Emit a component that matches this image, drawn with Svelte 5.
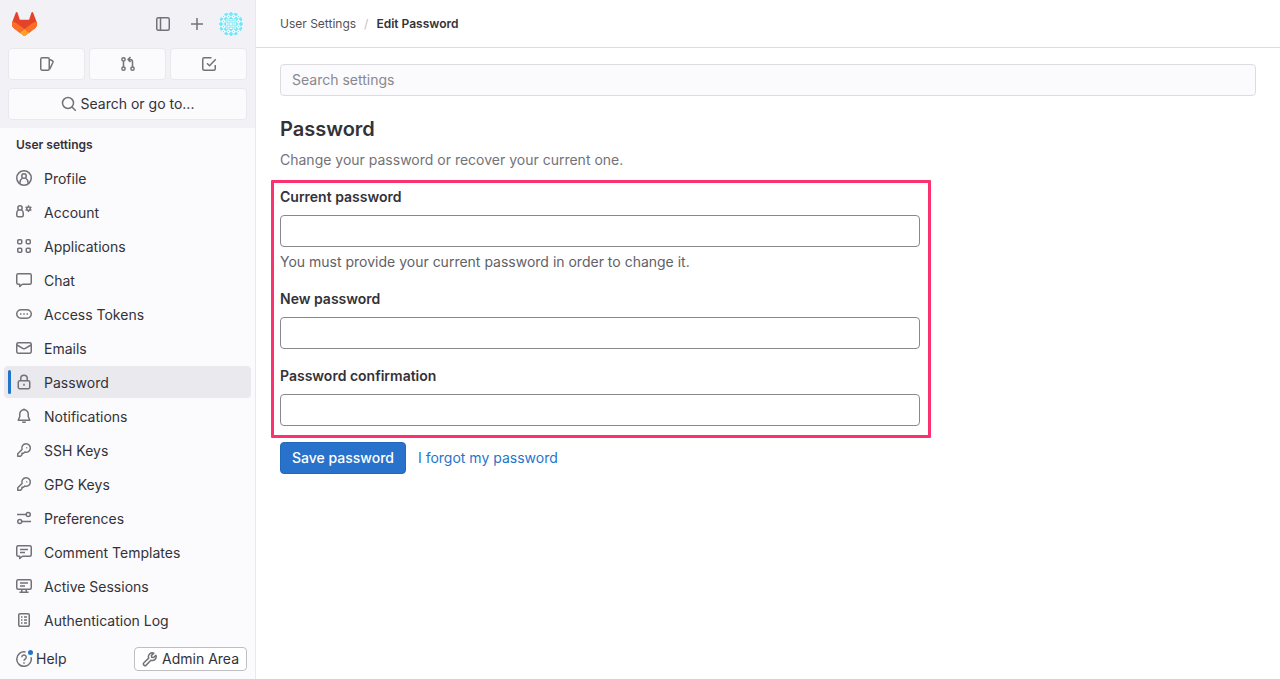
<script lang="ts">
  type NavItem = {
    title: string;
    icon: string;
  };

  const navItems: NavItem[] = [
    { title: "Profile", icon: "profile" },
    { title: "Account", icon: "account" },
    { title: "Applications", icon: "applications" },
    { title: "Chat", icon: "comment" },
    { title: "Access Tokens", icon: "token" },
    { title: "Emails", icon: "mail" },
    { title: "Password", icon: "lock" },
    { title: "Notifications", icon: "bell" },
    { title: "SSH Keys", icon: "key" },
    { title: "GPG Keys", icon: "key" },
    { title: "Preferences", icon: "preferences" },
    { title: "Comment Templates", icon: "comment-lines" },
    { title: "Active Sessions", icon: "monitor-lines" },
    { title: "Authentication Log", icon: "log" },
  ];

  const shortcuts = [
    { title: "Issues", icon: "issues" },
    { title: "Merge requests", icon: "merge-request" },
    { title: "To-Do List", icon: "todo-done" },
  ];

  // 16x16 outlines, drawn with a 1.5 stroke
  const icons: Record<string, string[]> = {
    sidebar: [
      "M3.25 1.75h9.5a1.5 1.5 0 0 1 1.5 1.5v9.5a1.5 1.5 0 0 1-1.5 1.5h-9.5a1.5 1.5 0 0 1-1.5-1.5v-9.5a1.5 1.5 0 0 1 1.5-1.5z",
      "M5.5 2v12",
    ],
    plus: ["M8 2v12M2 8h12"],
    issues: [
      "M3.25 1.75h5.5a1.5 1.5 0 0 1 1.5 1.5v9.5a1.5 1.5 0 0 1-1.5 1.5h-5.5a1.5 1.5 0 0 1-1.5-1.5v-9.5a1.5 1.5 0 0 1 1.5-1.5z",
      "M10.5 3.4l2.9 1.4a1.2 1.2 0 0 1 .6 1.5l-3.3 6.9",
    ],
    "merge-request": [
      "M3.5 5v6M3.5 1.75a1.6 1.6 0 1 1 0 3.25 1.6 1.6 0 0 1 0-3.25zM3.5 11a1.6 1.6 0 1 1 0 3.25 1.6 1.6 0 0 1 0-3.25zM12.5 11a1.6 1.6 0 1 1 0 3.25 1.6 1.6 0 0 1 0-3.25z",
      "M12.5 11V6a2.5 2.5 0 0 0-2.5-2.5H8.5M10.5 1L8 3.5 10.5 6",
    ],
    "todo-done": [
      "M10.5 1.75H3.25a1.5 1.5 0 0 0-1.5 1.5v9.5a1.5 1.5 0 0 0 1.5 1.5h9.5a1.5 1.5 0 0 0 1.5-1.5V9",
      "M6 7.25l2.5 2.5 6.25-6.5",
    ],
    search: [
      "M7 1.5a5.5 5.5 0 1 1 0 11 5.5 5.5 0 0 1 0-11z",
      "M11 11l3.75 3.75",
    ],
    profile: [
      "M8 .75a7.25 7.25 0 1 1 0 14.5 7.25 7.25 0 0 1 0-14.5z",
      "M8 3.75a2.25 2.25 0 1 1 0 4.5 2.25 2.25 0 0 1 0-4.5z",
      "M4 13.75v-1.5c0-2 1-3.25 2.5-4.25M12 13.75v-1.5c0-2-1-3.25-2.5-4.25",
    ],
    account: [
      "M4 1.75a2.1 2.1 0 1 1 0 4.25 2.1 2.1 0 0 1 0-4.25z",
      "M2.5 5.75C1.4 6.5.75 7.75.75 9.25v2a1.5 1.5 0 0 0 1.5 1.5h3.5a1.5 1.5 0 0 0 1.5-1.5v-2c0-1.5-.65-2.75-1.75-3.5",
      "M12.5 2.9a1.75 1.75 0 1 1 0 3.5 1.75 1.75 0 0 1 0-3.5z",
      "M12.5 1.25v1.5M12.5 6.5v1.5M9.6 3l1.2.7M14.2 5.6l1.2.7M9.6 6.3l1.2-.7M14.2 3.7l1.2-.7",
    ],
    applications: [
      "M2.75 1.75h2a1 1 0 0 1 1 1v2a1 1 0 0 1-1 1h-2a1 1 0 0 1-1-1v-2a1 1 0 0 1 1-1z",
      "M11.25 1.75h2a1 1 0 0 1 1 1v2a1 1 0 0 1-1 1h-2a1 1 0 0 1-1-1v-2a1 1 0 0 1 1-1z",
      "M2.75 10.25h2a1 1 0 0 1 1 1v2a1 1 0 0 1-1 1h-2a1 1 0 0 1-1-1v-2a1 1 0 0 1 1-1z",
      "M11.25 10.25h2a1 1 0 0 1 1 1v2a1 1 0 0 1-1 1h-2a1 1 0 0 1-1-1v-2a1 1 0 0 1 1-1z",
    ],
    comment: [
      "M2.25 1.75h11.5a1.5 1.5 0 0 1 1.5 1.5v7.5a1.5 1.5 0 0 1-1.5 1.5H6.5L3.75 14.5v-2.25h-1.5a1.5 1.5 0 0 1-1.5-1.5v-7.5a1.5 1.5 0 0 1 1.5-1.5z",
    ],
    token: [
      "M5 3.75h6a4.25 4.25 0 0 1 0 8.5H5a4.25 4.25 0 0 1 0-8.5z",
      "M4 8h1.5M7.25 8h1.5M10.5 8H12",
    ],
    mail: [
      "M2.25 2.75h11.5a1.5 1.5 0 0 1 1.5 1.5v7.5a1.5 1.5 0 0 1-1.5 1.5H2.25a1.5 1.5 0 0 1-1.5-1.5v-7.5a1.5 1.5 0 0 1 1.5-1.5z",
      "M1 5l6.2 3.6a1.6 1.6 0 0 0 1.6 0L15 5",
    ],
    lock: [
      "M3.75 6.75h8.5a1.5 1.5 0 0 1 1.5 1.5v5a1.5 1.5 0 0 1-1.5 1.5h-8.5a1.5 1.5 0 0 1-1.5-1.5v-5a1.5 1.5 0 0 1 1.5-1.5z",
      "M4.75 6.5v-2a3.25 3.25 0 0 1 6.5 0v2",
      "M8 9.75v2",
    ],
    bell: [
      "M8 1.75a4.25 4.25 0 0 0-4.25 4.25v2.5L2.25 12.25h11.5l-1.5-3.75V6A4.25 4.25 0 0 0 8 1.75z",
      "M8 .5v1M6.25 14.25h3.5",
    ],
    key: [
      "M10 1.75a4.25 4.25 0 1 1-1.2 8.3L7.5 11.25H6v1.5L4.5 14.25H1.75v-2.5l4.3-4.3A4.25 4.25 0 0 1 10 1.75z",
      "M10.25 5.75h1",
    ],
    preferences: [
      "M1 4.5h9M12.25 2.5a2 2 0 1 1 0 4 2 2 0 0 1 0-4z",
      "M6 11.5h9M3.75 9.5a2 2 0 1 1 0 4 2 2 0 0 1 0-4z",
    ],
    "comment-lines": [
      "M2.25 1.75h11.5a1.5 1.5 0 0 1 1.5 1.5v7.5a1.5 1.5 0 0 1-1.5 1.5H6.5L3.75 14.5v-2.25h-1.5a1.5 1.5 0 0 1-1.5-1.5v-7.5a1.5 1.5 0 0 1 1.5-1.5z",
      "M4 5.5h8M4 8.5h5",
    ],
    "monitor-lines": [
      "M2.25 1.75h11.5a1.5 1.5 0 0 1 1.5 1.5v6.5a1.5 1.5 0 0 1-1.5 1.5H2.25a1.5 1.5 0 0 1-1.5-1.5v-6.5a1.5 1.5 0 0 1 1.5-1.5z",
      "M4 5h8M4 8h5M5.75 11.5v2.5M10.25 11.5v2.5M3.5 14.25h9",
    ],
    log: [
      "M4 1.75h8a1.25 1.25 0 0 1 1.25 1.25v10A1.25 1.25 0 0 1 12 14.25H4A1.25 1.25 0 0 1 2.75 13V3A1.25 1.25 0 0 1 4 1.75z",
      "M5 5h1.5M8 5h3M5 8h1.5M8 8h3M5 11h1.5M8 11h3",
    ],
    help: [
      "M9.5 1A7.25 7.25 0 1 0 15 6.2",
      "M5.75 6.25a2.25 2.25 0 1 1 3.3 2C8.4 8.6 8 9 8 9.75M8 11.25v1.5",
    ],
    wrench: [
      "M13.9 4.2L11.6 6.5l-1.9-.2-.2-1.9 2.3-2.3a3.9 3.9 0 0 0-5.1 5L1.9 11.8a1.6 1.6 0 0 0 2.3 2.3l4.7-4.8a3.9 3.9 0 0 0 5-5.1z",
    ],
  };

  let currentItem = "Password";
  let search = "";
  let currentPassword = "";
  let newPassword = "";
  let confirmation = "";
</script>

{#snippet icon(name: string)}
  <svg class="icon" viewBox="0 0 16 16" aria-hidden="true">
    {#each icons[name] as d}
      <path {d} />
    {/each}
  </svg>
{/snippet}

<div class="layout">
  <aside class="sidebar">
    <div class="top">
      <div class="brand-row">
        <a class="logo" href="#home" aria-label="Homepage">
          <svg viewBox="0 0 25 24" width="25" height="24">
            <path
              fill="#e24329"
              d="m24.507 9.5-.034-.09L21.082.562a.896.896 0 0 0-1.694.091l-2.29 7.01H7.825L5.535.653a.898.898 0 0 0-1.694-.09L.451 9.411.416 9.5a6.297 6.297 0 0 0 2.09 7.278l.012.01.03.022 5.16 3.867 2.56 1.935 1.554 1.176a1.051 1.051 0 0 0 1.268 0l1.555-1.176 2.56-1.935 5.197-3.89.014-.01A6.297 6.297 0 0 0 24.507 9.5Z"
            />
            <path
              fill="#fc6d26"
              d="m24.507 9.5-.034-.09a11.44 11.44 0 0 0-4.56 2.051l-7.447 5.632 4.742 3.584 5.197-3.89.014-.01A6.297 6.297 0 0 0 24.507 9.5Z"
            />
            <path
              fill="#fca326"
              d="m7.707 20.677 2.56 1.935 1.555 1.176a1.051 1.051 0 0 0 1.268 0l1.555-1.176 2.56-1.935-4.743-3.584-4.755 3.584Z"
            />
            <path
              fill="#fc6d26"
              d="M5.01 11.461a11.43 11.43 0 0 0-4.56-2.05L.416 9.5a6.297 6.297 0 0 0 2.09 7.278l.012.01.03.022 5.16 3.867 4.745-3.584-7.444-5.632Z"
            />
          </svg>
        </a>
        <button class="icon-button" aria-label="Hide sidebar">{@render icon("sidebar")}</button>
        <button class="icon-button" aria-label="Create new">{@render icon("plus")}</button>
        <button class="avatar" aria-label="User menu">
          <svg viewBox="0 0 24 24" width="24" height="24">
            <defs>
              <clipPath id="avatar-clip"><circle cx="12" cy="12" r="12" /></clipPath>
              <pattern id="avatar-tile" width="5" height="5" x="2" y="2" patternUnits="userSpaceOnUse">
                <path d="M0 0h5v5H0z" fill="#eefcff" />
                <path d="M1 1h3v3H1z" fill="none" stroke="#7be5f8" />
              </pattern>
              <pattern id="avatar-edge" width="5" height="5" x="2" y="2" patternUnits="userSpaceOnUse">
                <path d="M0 0h5v5H0z" fill="#78e4f8" />
                <path d="M2.5 0L5 2.5 2.5 5 0 2.5z" fill="#eefcff" />
                <path d="M2 2h1v1H2z" fill="#78e4f8" />
              </pattern>
            </defs>
            <g clip-path="url(#avatar-clip)">
              <path d="M0 0h24v24H0z" fill="url(#avatar-edge)" />
              <path d="M7 7h10v10H7z" fill="url(#avatar-tile)" />
            </g>
          </svg>
        </button>
      </div>
      <div class="shortcuts">
        {#each shortcuts as item}
          <a class="tile" href="#{item.icon}" aria-label={item.title}>{@render icon(item.icon)}</a>
        {/each}
      </div>
      <button class="tile search-button">
        {@render icon("search")}
        Search or go to...
      </button>
    </div>

    <nav class="menu">
      <h2>User settings</h2>
      <ul>
        {#each navItems as item}
          <li>
            <a
              href="#{item.title}"
              class:active={item.title === currentItem}
              aria-current={item.title === currentItem ? "page" : undefined}
            >
              {@render icon(item.icon)}
              <span>{item.title}</span>
            </a>
          </li>
        {/each}
      </ul>
    </nav>

    <div class="footer">
      <button class="help">
        <span class="help-icon">{@render icon("help")}</span>
        Help
      </button>
      <a class="admin" href="#admin">{@render icon("wrench")} Admin Area</a>
    </div>
  </aside>

  <main>
    <nav class="breadcrumbs" aria-label="Breadcrumb">
      <a href="#settings">User Settings</a>
      <span class="separator">/</span>
      <a class="current" href="#password" aria-current="page">Edit Password</a>
    </nav>

    <div class="content">
      <input
        class="settings-search"
        type="search"
        placeholder="Search settings"
        aria-label="Search settings"
        bind:value={search}
      />
      <h1>Password</h1>
      <p class="description">Change your password or recover your current one.</p>

      <form on:submit|preventDefault>
        <div class="fields">
          <div class="field">
            <label for="current-password">Current password</label>
            <input id="current-password" type="password" bind:value={currentPassword} />
            <p>You must provide your current password in order to change it.</p>
          </div>
          <div class="field">
            <label for="new-password">New password</label>
            <input id="new-password" type="password" bind:value={newPassword} />
          </div>
          <div class="field">
            <label for="password-confirmation">Password confirmation</label>
            <input id="password-confirmation" type="password" bind:value={confirmation} />
          </div>
        </div>
        <div class="actions">
          <button class="save" type="submit">Save password</button>
          <a href="#forgot">I forgot my password</a>
        </div>
      </form>
    </div>
  </main>
</div>

<style>
  :global(body) {
    background: #fff;
    color: #333238;
    font-family: Inter, "Noto Sans", sans-serif;
    font-size: 14px;
    line-height: 20px;
  }

  * {
    box-sizing: border-box;
  }

  a {
    color: inherit;
    text-decoration: none;
  }

  button,
  input {
    font: inherit;
    color: inherit;
  }

  button {
    padding: 0;
    border: 0;
    background: none;
    cursor: pointer;
  }

  .layout {
    display: flex;
    min-height: 100vh;
  }

  .sidebar {
    display: flex;
    flex-direction: column;
    flex: 0 0 256px;
    height: 100vh;
    background: #fbfafd;
    border-right: 1px solid #e9e8ee;
  }

  .icon {
    display: block;
    flex: none;
    width: 16px;
    height: 16px;
    fill: none;
    stroke: #737278;
    stroke-width: 1.5;
    stroke-linejoin: round;
  }

  .top {
    padding: 8px;
    background: #f2f1f6;
  }

  .brand-row {
    display: flex;
    align-items: center;
    gap: 2px;
    height: 32px;
  }

  .logo {
    display: flex;
    margin-left: 4px;
    margin-right: auto;
  }

  .icon-button,
  .avatar {
    display: flex;
    align-items: center;
    justify-content: center;
    width: 32px;
    height: 32px;
  }

  .shortcuts {
    display: grid;
    grid-template-columns: repeat(3, 1fr);
    gap: 4px;
    margin: 8px 0;
  }

  .tile {
    display: flex;
    align-items: center;
    justify-content: center;
    gap: 4px;
    height: 32px;
    background: #fbfafd;
    border: 1px solid #e9e8ee;
    border-radius: 4px;
  }

  .search-button {
    width: 100%;
  }

  .menu {
    flex: 1;
    min-height: 0;
    overflow: hidden;
  }

  .menu h2 {
    margin: 0;
    padding: 8px 16px;
    font-size: 12px;
    font-weight: 600;
    line-height: 18px;
  }

  .menu ul {
    margin: 0;
    padding: 0 4px;
    list-style: none;
  }

  .menu a {
    display: flex;
    align-items: center;
    gap: 12px;
    position: relative;
    height: 32px;
    margin-bottom: 2px;
    padding: 0 12px;
    border-radius: 4px;
  }

  .menu span {
    padding-top: 2px;
  }

  .menu a:hover,
  .menu a.active {
    background: #eae9ee;
  }

  .menu a.active::before {
    content: "";
    position: absolute;
    top: 4px;
    bottom: 4px;
    left: 4px;
    width: 3px;
    border-radius: 4px;
    background: #1f75cb;
  }

  .footer {
    display: flex;
    align-items: center;
    justify-content: space-between;
    padding: 8px 8px 8px 16px;
  }

  .help {
    display: flex;
    align-items: center;
    gap: 4px;
  }

  .help-icon {
    position: relative;
  }

  .help-icon::after {
    content: "";
    position: absolute;
    top: -1px;
    right: -1px;
    width: 5px;
    height: 5px;
    border-radius: 50%;
    background: #1f75cb;
  }

  .admin {
    display: flex;
    align-items: center;
    gap: 4px;
    height: 24px;
    padding: 0 7px;
    background: #fff;
    border: 1px solid #bfbfc3;
    border-radius: 4px;
  }

  main {
    flex: 1;
    min-width: 0;
  }

  .breadcrumbs {
    display: flex;
    align-items: center;
    gap: 8px;
    height: 48px;
    padding: 0 24px;
    border-bottom: 1px solid #dcdcde;
    color: #535158;
    font-size: 12px;
  }

  .separator {
    color: #bfbfc3;
  }

  .current {
    color: #333238;
    font-weight: 600;
  }

  .content {
    padding: 16px 24px;
  }

  .settings-search {
    display: block;
    width: 100%;
    height: 32px;
    padding: 0 11px 2px;
    background: #fbfafd;
    border: 1px solid #dcdcde;
    border-radius: 4px;
  }

  .settings-search::placeholder {
    color: #89888d;
    opacity: 1;
  }

  h1 {
    margin: 20px 0 8px;
    font-size: 20px;
    font-weight: 600;
    line-height: 26px;
  }

  .description {
    margin: 0 0 16px;
    color: #737278;
  }

  form {
    max-width: 640px;
  }

  .fields {
    display: flex;
    flex-direction: column;
    gap: 16px;
    position: relative;
  }

  /* Frame round the password fields, laid over the form */
  .fields::after {
    content: "";
    position: absolute;
    inset: -6px -11px -12px -9px;
    border: 3px solid #fc3170;
    border-radius: 1px;
    pointer-events: none;
  }

  .field label {
    display: block;
    margin-bottom: 8px;
    font-weight: 600;
    line-height: 21px;
  }

  .field input {
    display: block;
    width: 100%;
    height: 32px;
    padding: 0 11px;
    background: #fff;
    border: 1px solid #89888d;
    border-radius: 4px;
  }

  .field p {
    margin: 5px 0 0;
    color: #626168;
  }

  .actions {
    display: flex;
    align-items: center;
    gap: 12px;
    margin-top: 16px;
    color: #1f75cb;
  }

  .save {
    height: 32px;
    padding: 0 11px;
    background: #2972cb;
    border: 1px solid #2268bd;
    border-radius: 4px;
    color: #fff;
    font-weight: 500;
  }
</style>
